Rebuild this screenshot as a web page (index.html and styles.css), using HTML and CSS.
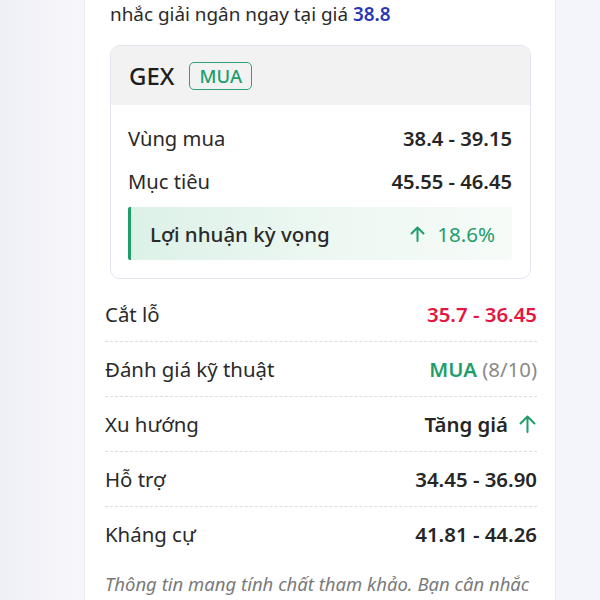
FILE: index.html
```html
<!DOCTYPE html>
<html>
<head>
<title>GEX</title>
<link rel="stylesheet" href="styles.css">
</head>
<body>
<div class="page">
  <div class="card">
    <p class="intro">nhắc giải ngân ngay tại giá <span class="price">38.8</span></p>

    <div class="stock">
      <div class="stockHead">
        <span class="ticker">GEX</span>
        <span class="badge">MUA</span>
      </div>
      <div class="stockBody">
        <div class="line">
          <span>Vùng mua</span>
          <span class="value">38.4 - 39.15</span>
        </div>
        <div class="line">
          <span>Mục tiêu</span>
          <span class="value">45.55 - 46.45</span>
        </div>
        <div class="profit">
          <span>Lợi nhuận kỳ vọng</span>
          <span class="profitValue">
            <svg width="17" height="18" viewBox="0 0 17 18"><path d="M8.5 16V2.5M2.5 8.5L8.5 2.5L14.5 8.5" fill="none" stroke="#1f9e6c" stroke-width="2" stroke-linecap="round" stroke-linejoin="round"/></svg>
            18.6%
          </span>
        </div>
      </div>
    </div>

    <div class="rows">
      <div class="row">
        <span>Cắt lỗ</span>
        <span class="value red">35.7 - 36.45</span>
      </div>
      <div class="row">
        <span>Đánh giá kỹ thuật</span>
        <span class="value"><span class="green">MUA</span> <span class="score">(8/10)</span></span>
      </div>
      <div class="row">
        <span>Xu hướng</span>
        <span class="value trend">Tăng giá
          <svg width="19" height="20" viewBox="0 0 19 20"><path d="M9.5 18V2.5M2.5 9.5L9.5 2.5L16.5 9.5" fill="none" stroke="#1f9e6c" stroke-width="2" stroke-linecap="round" stroke-linejoin="round"/></svg>
        </span>
      </div>
      <div class="row">
        <span>Hỗ trợ</span>
        <span class="value">34.45 - 36.90</span>
      </div>
      <div class="row">
        <span>Kháng cự</span>
        <span class="value">41.81 - 44.26</span>
      </div>
    </div>

    <p class="note">Thông tin mang tính chất tham khảo. Bạn cân nhắc</p>
  </div>
</div>
</body>
</html>
```

FILE: styles.css
```css
body {
  margin: 0;
  font-family: "Noto Sans", Lato, sans-serif;
  color: #2a2a2a;
  background: linear-gradient(90deg, #eff0f7 0%, #f7f7fb 14%, #f4f5fa 100%);
}

.page {
  height: 600px;
  overflow: hidden;
}

.card {
  width: 472px;
  margin-left: 84px;
  height: 600px;
  background-color: #fff;
  border-left: 1px solid #e9eaf2;
  border-right: 1px solid #e9eaf2;
  box-sizing: border-box;
}

.intro {
  margin: 0;
  padding-left: 25px;
  font-size: 18.9px;
  line-height: 28px;
}

.price {
  color: #2936b8;
  font-weight: 600;
}

.stock {
  margin: 17px 24px 0 25px;
  border: 1px solid #e3e5ee;
  border-radius: 10px;
  overflow: hidden;
}

.stockHead {
  height: 59px;
  background-color: #f2f2f3;
  display: flex;
  align-items: center;
  gap: 15px;
  padding-left: 18px;
}

.ticker {
  font-size: 24px;
  font-weight: 500;
  color: #1e1e1e;
}

.badge {
  border: 1.5px solid #2aa476;
  border-radius: 5px;
  color: #1f9e6c;
  font-size: 18.5px;
  font-weight: 500;
  padding: 0 9px;
  line-height: 26px;
}

.stockBody {
  padding: 11px 18px 18px 17px;
}

.line {
  display: flex;
  justify-content: space-between;
  align-items: center;
  height: 43px;
  font-size: 20.2px;
}

.profit {
  margin-top: 5px;
  height: 53px;
  display: flex;
  justify-content: space-between;
  align-items: center;
  padding: 0 17px 0 19px;
  border-left: 3px solid #1f9e6c;
  border-radius: 2px 4px 4px 2px;
  background: linear-gradient(90deg, #dcf1e7 0%, #eef8f3 55%, #f6fbf8 100%);
  font-size: 20.5px;
  font-weight: 500;
}

.profitValue {
  color: #1f9e6c;
  font-weight: 400;
  display: flex;
  align-items: center;
  gap: 11px;
}

.value {
  font-weight: 600;
  color: #262626;
}

.rows {
  margin-top: 8px;
  padding: 0 18px 0 20px;
}

.row {
  display: flex;
  justify-content: space-between;
  align-items: center;
  height: 54px;
  font-size: 20.4px;
  border-bottom: 1px dashed #dedede;
}

.row:last-child {
  border-bottom: none;
}

.red {
  color: #e5163f;
}

.green {
  color: #1f9e6c;
}

.score {
  color: #8a8a8a;
  font-weight: 400;
}

.trend {
  display: flex;
  align-items: center;
  gap: 10px;
}

.note {
  margin: 10px 0 0 20px;
  font-size: 18.5px;
  line-height: 26px;
  font-style: italic;
  color: #7a7a7a;
  white-space: nowrap;
}
```
